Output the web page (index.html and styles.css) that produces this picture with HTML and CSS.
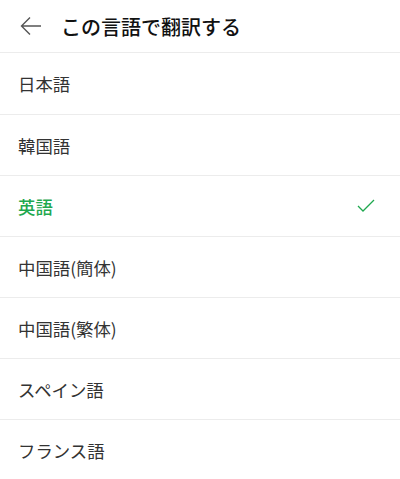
FILE: index.html
```html
<!DOCTYPE html>
<html lang="ja">
<head>
<meta charset="utf-8">
<link rel="stylesheet" href="styles.css">
</head>
<body>
<div class="header">
  <svg class="back" width="24" height="24" viewBox="0 0 24 24"><path d="M22 12H3M11 3.5L2.5 12L11 20.5" fill="none" stroke="#555" stroke-width="1.4"/></svg>
  <h1 class="title">この言語で翻訳する</h1>
</div>
<ul class="list">
  <li class="item">日本語</li>
  <li class="item">韓国語</li>
  <li class="item selected">英語<svg class="check" width="20" height="16" viewBox="0 0 20 16"><path d="M2 8L7 13L18 2" fill="none" stroke="#1fa84f" stroke-width="1.3"/></svg></li>
  <li class="item">中国語(簡体)</li>
  <li class="item">中国語(繁体)</li>
  <li class="item">スペイン語</li>
  <li class="item">フランス語</li>
</ul>
</body>
</html>
```
FILE: styles.css
```css
html, body { margin: 0; padding: 0; background: #fff; }
body { font-family: "Noto Sans CJK JP", "Noto Sans", sans-serif; color: #222; }
.header {
  height: 52px;
  display: flex;
  align-items: center;
  border-bottom: 1px solid #ececec;
  padding-left: 19px;
}
.back { margin-right: 18px; flex: none; }
.title { margin: 0; font-size: 20px; font-weight: 500; color: #111; }
.list { list-style: none; margin: 0; padding: 0; }
.item {
  height: 60px;
  display: flex;
  align-items: center;
  justify-content: space-between;
  padding: 0 24px 0 18px;
  font-size: 17.4px;
  color: #333;
  border-bottom: 1px solid #ececec;
}
.item:first-child { height: 61px; }
.item.selected { color: #1fa84f; font-weight: 500; }
.check { flex: none; }
```
